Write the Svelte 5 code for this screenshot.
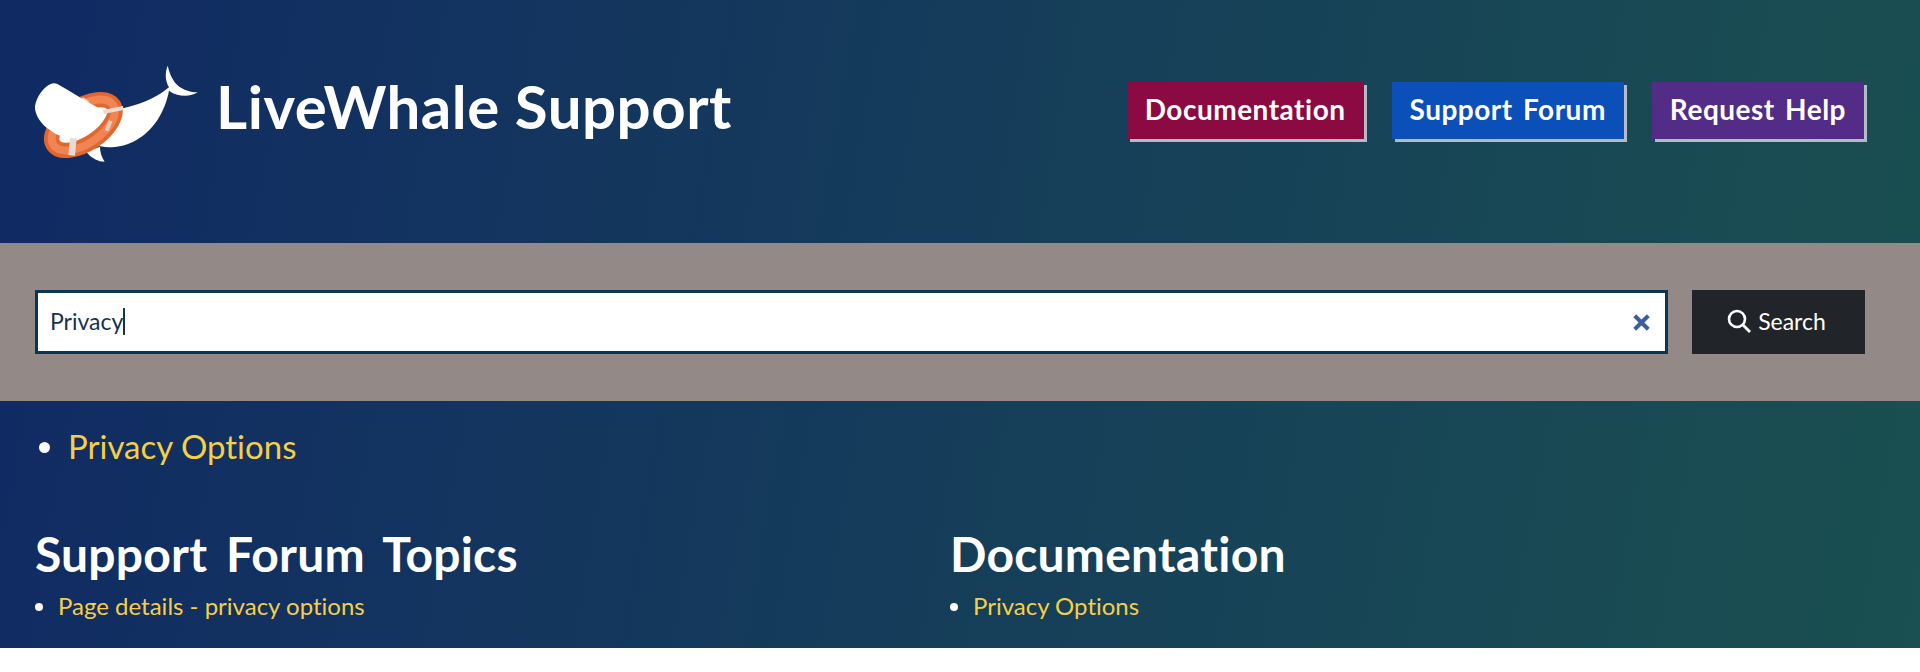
<script>
  const buttons = [
    { label: 'Documentation', cls: 'doc' },
    { label: 'Support Forum', cls: 'forum' },
    { label: 'Request Help', cls: 'help' }
  ];
</script>

<div class="page">
  <header class="top">
    <a class="brand" href="#home">
      <svg class="logo" viewBox="0 0 570 360" aria-hidden="true">
        <path fill="#fff" d="M443 47C434 70 436 92 447 112C420 135 380 158 310 175L240 180L230 285C250 295 300 295 340 275C400 245 435 185 447 122C470 140 510 142 533 127C505 127 480 115 465 98C455 85 447 65 443 47Z"/>
        <path fill="#fff" d="M198 305C215 325 235 335 254 335C244 320 240 305 240 290Z"/>
        <ellipse cx="190" cy="225" rx="108" ry="56" transform="rotate(-34 190 225)" fill="#fff" stroke="#e2672f" stroke-width="46"/>
        <ellipse cx="190" cy="225" rx="108" ry="56" transform="rotate(-34 190 225)" fill="none" stroke="#f08553" stroke-width="24"/>
        <path fill="none" stroke="#eadbd2" stroke-width="20" d="M160 264L155 316"/>
        <path fill="none" stroke="#eadbd2" stroke-width="12" d="M250 186L310 174"/>
        <path fill="none" stroke="#eadbd2" stroke-width="11" d="M186 146L204 158"/>
        <path fill="none" stroke="#e9c9b7" stroke-width="12" d="M272 212L260 242"/>
        <path fill="#fff" d="M92 102C70 112 50 140 45 168C43 195 65 225 90 240C110 258 145 268 170 264C205 255 235 225 245 190C246 182 240 176 232 172C190 150 150 122 112 102C106 99 98 99 92 102Z"/>
      </svg>
      <span class="title">LiveWhale Support</span>
    </a>
    <nav class="nav">
      {#each buttons as b}
        <a class="btn {b.cls}" href="#{b.cls}">{b.label}</a>
      {/each}
    </nav>
  </header>

  <section class="band">
    <div class="field">
      <span class="value">Privacy</span><span class="caret"></span>
      <svg class="clear" viewBox="0 0 14 14" aria-hidden="true">
        <path d="M2 2L12 12M12 2L2 12" stroke="#3b5f9c" stroke-width="3" fill="none"/>
      </svg>
    </div>
    <button class="search" type="button">
      <svg viewBox="0 0 24 24" aria-hidden="true">
        <circle cx="10" cy="10" r="8" fill="none" stroke="#fff" stroke-width="2.6"/>
        <path d="M16 16L23 23" stroke="#fff" stroke-width="2.8" fill="none"/>
      </svg>
      <span>Search</span>
    </button>
  </section>

  <ul class="suggest">
    <li><a href="#privacy">Privacy Options</a></li>
  </ul>

  <section class="results">
    <div>
      <h2>Support Forum Topics</h2>
      <ul><li><a href="#details">Page details - privacy options</a></li></ul>
    </div>
    <div>
      <h2>Documentation</h2>
      <ul><li><a href="#options">Privacy Options</a></li></ul>
    </div>
  </section>
</div>

<style>
  :global(body) {
    margin: 0;
    background: #fff;
  }
  .page {
    height: 648px;
    overflow: hidden;
    background: linear-gradient(100deg, #102a64 0%, #1a5050 100%);
    font-family: Lato, "Open Sans", sans-serif;
    font-variant-ligatures: none;
    color: #fff;
  }
  a {
    text-decoration: none;
  }
  .top {
    height: 243px;
    box-sizing: border-box;
    display: flex;
    align-items: flex-start;
    justify-content: space-between;
    padding-right: 56px;
  }
  .brand {
    display: flex;
    align-items: center;
    padding-top: 50px;
    padding-left: 20px;
    color: #fff;
  }
  .logo {
    width: 190px;
    height: 120px;
    flex: none;
  }
  .title {
    margin-left: 6px;
    margin-top: -9px;
    font-size: 60px;
    font-weight: 700;
    line-height: 1;
    letter-spacing: 0.5px;
    white-space: nowrap;
  }
  .nav {
    display: flex;
    gap: 28px;
    padding-top: 82px;
  }
  .btn {
    display: block;
    height: 57px;
    line-height: 55px;
    padding: 0 18px;
    color: #fff;
    font-size: 28px;
    font-weight: 700;
    letter-spacing: 0.5px;
    word-spacing: 3px;
    white-space: nowrap;
    box-shadow: 3px 3px 0 #b2bcc4;
  }
  .doc { background: #8c0a42; }
  .forum { background: #0a50b8; }
  .help { background: #532c87; }
  .band {
    height: 158px;
    box-sizing: border-box;
    background: #938987;
    display: flex;
    align-items: center;
    gap: 24px;
    padding: 0 55px 0 35px;
  }
  .field {
    flex: 1;
    height: 64px;
    box-sizing: border-box;
    border: 3px solid #0c3555;
    background: #fff;
    display: flex;
    align-items: center;
    padding: 0 14px 2px 12px;
    color: #16324f;
    font-size: 23px;
  }
  .caret {
    width: 1.5px;
    height: 27px;
    background: #16324f;
  }
  .clear {
    width: 19px;
    height: 19px;
    margin-left: auto;
    margin-top: 2px;
  }
  .search {
    width: 173px;
    height: 64px;
    padding: 0 0 2px;
    border: 0;
    background: #212529;
    color: #fff;
    font: inherit;
    font-size: 23px;
    display: flex;
    align-items: center;
    justify-content: center;
    gap: 7px;
  }
  .search svg {
    width: 24px;
    height: 24px;
    margin-left: -4px;
  }
  ul {
    margin: 0;
    padding: 0;
  }
  li a {
    color: #f5cf45;
  }
  .suggest {
    padding: 25px 0 0 68px;
    font-size: 33px;
    line-height: 40px;
  }
  .results {
    display: grid;
    grid-template-columns: 915px 1fr;
    padding: 60px 0 0 35px;
  }
  h2 {
    margin: 0 0 9px;
    font-size: 48px;
    line-height: 56px;
    font-weight: 700;
    letter-spacing: 0.2px;
    word-spacing: 7px;
  }
  .results ul {
    padding-left: 23px;
    font-size: 24px;
    line-height: 30px;
  }
</style>
